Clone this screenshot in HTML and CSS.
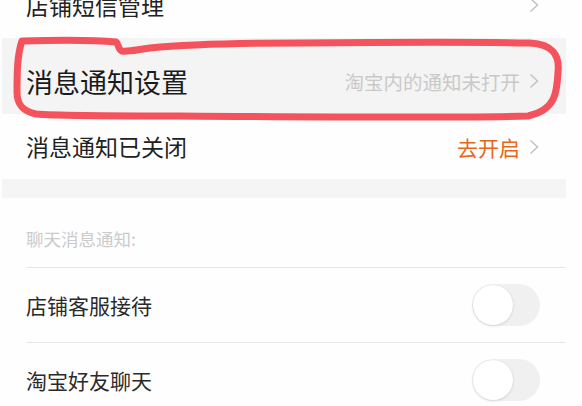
FILE: index.html
```html
<!DOCTYPE html>
<html lang="zh-CN">
<head>
<meta charset="utf-8">
<link rel="stylesheet" href="styles.css">
</head>
<body>
<div class="page">
  <div class="row row-top">
    <span class="label l23">店铺短信管理</span>
    <span class="right"><svg class="chev" viewBox="0 0 10 16"><path d="M1.5 1.5 L8.5 8 L1.5 14.5"/></svg></span>
  </div>
  <div class="row row-main">
    <span class="label l27">消息通知设置</span>
    <span class="right"><span class="hint">淘宝内的通知未打开</span><svg class="chev" viewBox="0 0 10 16"><path d="M1.5 1.5 L8.5 8 L1.5 14.5"/></svg></span>
  </div>
  <div class="row row-off">
    <span class="label l23">消息通知已关闭</span>
    <span class="right"><span class="action">去开启</span><svg class="chev" viewBox="0 0 10 16"><path d="M1.5 1.5 L8.5 8 L1.5 14.5"/></svg></span>
  </div>
  <div class="band"></div>
  <div class="section">
    <div class="head"><span>聊天消息通知:</span></div>
    <div class="item"><span class="label l21">店铺客服接待</span><span class="toggle"><span class="knob"></span></span></div>
    <div class="item"><span class="label l21">淘宝好友聊天</span><span class="toggle"><span class="knob"></span></span></div>
  </div>
  <svg class="scribble" viewBox="0 0 582 130" preserveAspectRatio="none">
    <path d="M22 41 C60 40 95 40 116 42 C119 44 118 50 122 51 C128 52 135 50 150 48 C190 44 250 43 300 43 C400 42 480 42 530 43 C552 44 560 55 558 72 C557 92 556 110 528 116 C450 118 300 117 180 116 C110 116 60 116 36 114 C22 111 17 104 17 92 C17 75 17 55 22 41 Z"/>
  </svg>
</div>
</body>
</html>
```

FILE: styles.css
```css
html, body {
  margin: 0;
  padding: 0;
  background: #fefefe;
}
body {
  font-family: "Noto Sans CJK SC", "Noto Sans", sans-serif;
  color: #222;
  overflow: hidden;
  width: 582px;
  height: 406px;
}
.page {
  position: relative;
  display: flow-root;
  margin-left: 2px;
  width: 564px;
  background: #fefefe;
}
.row {
  display: flex;
  align-items: center;
  justify-content: space-between;
  padding: 0 27px 0 24px;
  box-sizing: border-box;
}
.row-top {
  height: 66px;
  margin-top: -28px;
}
.row-main {
  height: 76px;
  padding-top: 10px;
  background: #f4f4f4;
}
.row-off {
  height: 65px;
}
.label {
  line-height: 1;
  color: #222;
}
.l27 { font-size: 27px; color: #1b1b1b; }
.l23 { font-size: 23px; }
.l21 { font-size: 21px; color: #2a2a2a; }
.right {
  display: flex;
  align-items: center;
  gap: 9px;
}
.hint {
  font-size: 19.5px;
  color: #c9c9c9;
}
.action {
  font-size: 21px;
  color: #e8651c;
}
.chev {
  width: 10px;
  height: 16px;
  fill: none;
  stroke: #c2c2c2;
  stroke-width: 1.5;
}
.band {
  height: 19px;
  background: #f5f5f5;
}
.section {
  padding-left: 24px;
}
.head {
  height: 70px;
  display: flex;
  align-items: flex-end;
  padding-bottom: 20px;
  box-sizing: border-box;
  border-bottom: 1px solid #e6e6e6;
  font-size: 17.5px;
  color: #cbcbcb;
}
.head span { line-height: 1; }
.item {
  height: 75px;
  display: flex;
  align-items: center;
  justify-content: space-between;
  padding-right: 26px;
  border-bottom: 1px solid #e6e6e6;
  box-sizing: border-box;
}
.toggle {
  width: 68px;
  height: 42px;
  border-radius: 21px;
  background: #f0f0f0;
  display: flex;
  align-items: center;
  padding-left: 1px;
  box-sizing: border-box;
}
.knob {
  width: 40px;
  height: 40px;
  border-radius: 50%;
  background: #fff;
  box-shadow: 0 1px 3px rgba(0,0,0,0.12), 0 0 1px rgba(0,0,0,0.08);
}
.scribble {
  position: absolute;
  left: -2px;
  top: 0;
  width: 582px;
  height: 130px;
  fill: none;
  stroke: #f4525c;
  stroke-width: 7;
  stroke-linejoin: round;
  pointer-events: none;
}
```
